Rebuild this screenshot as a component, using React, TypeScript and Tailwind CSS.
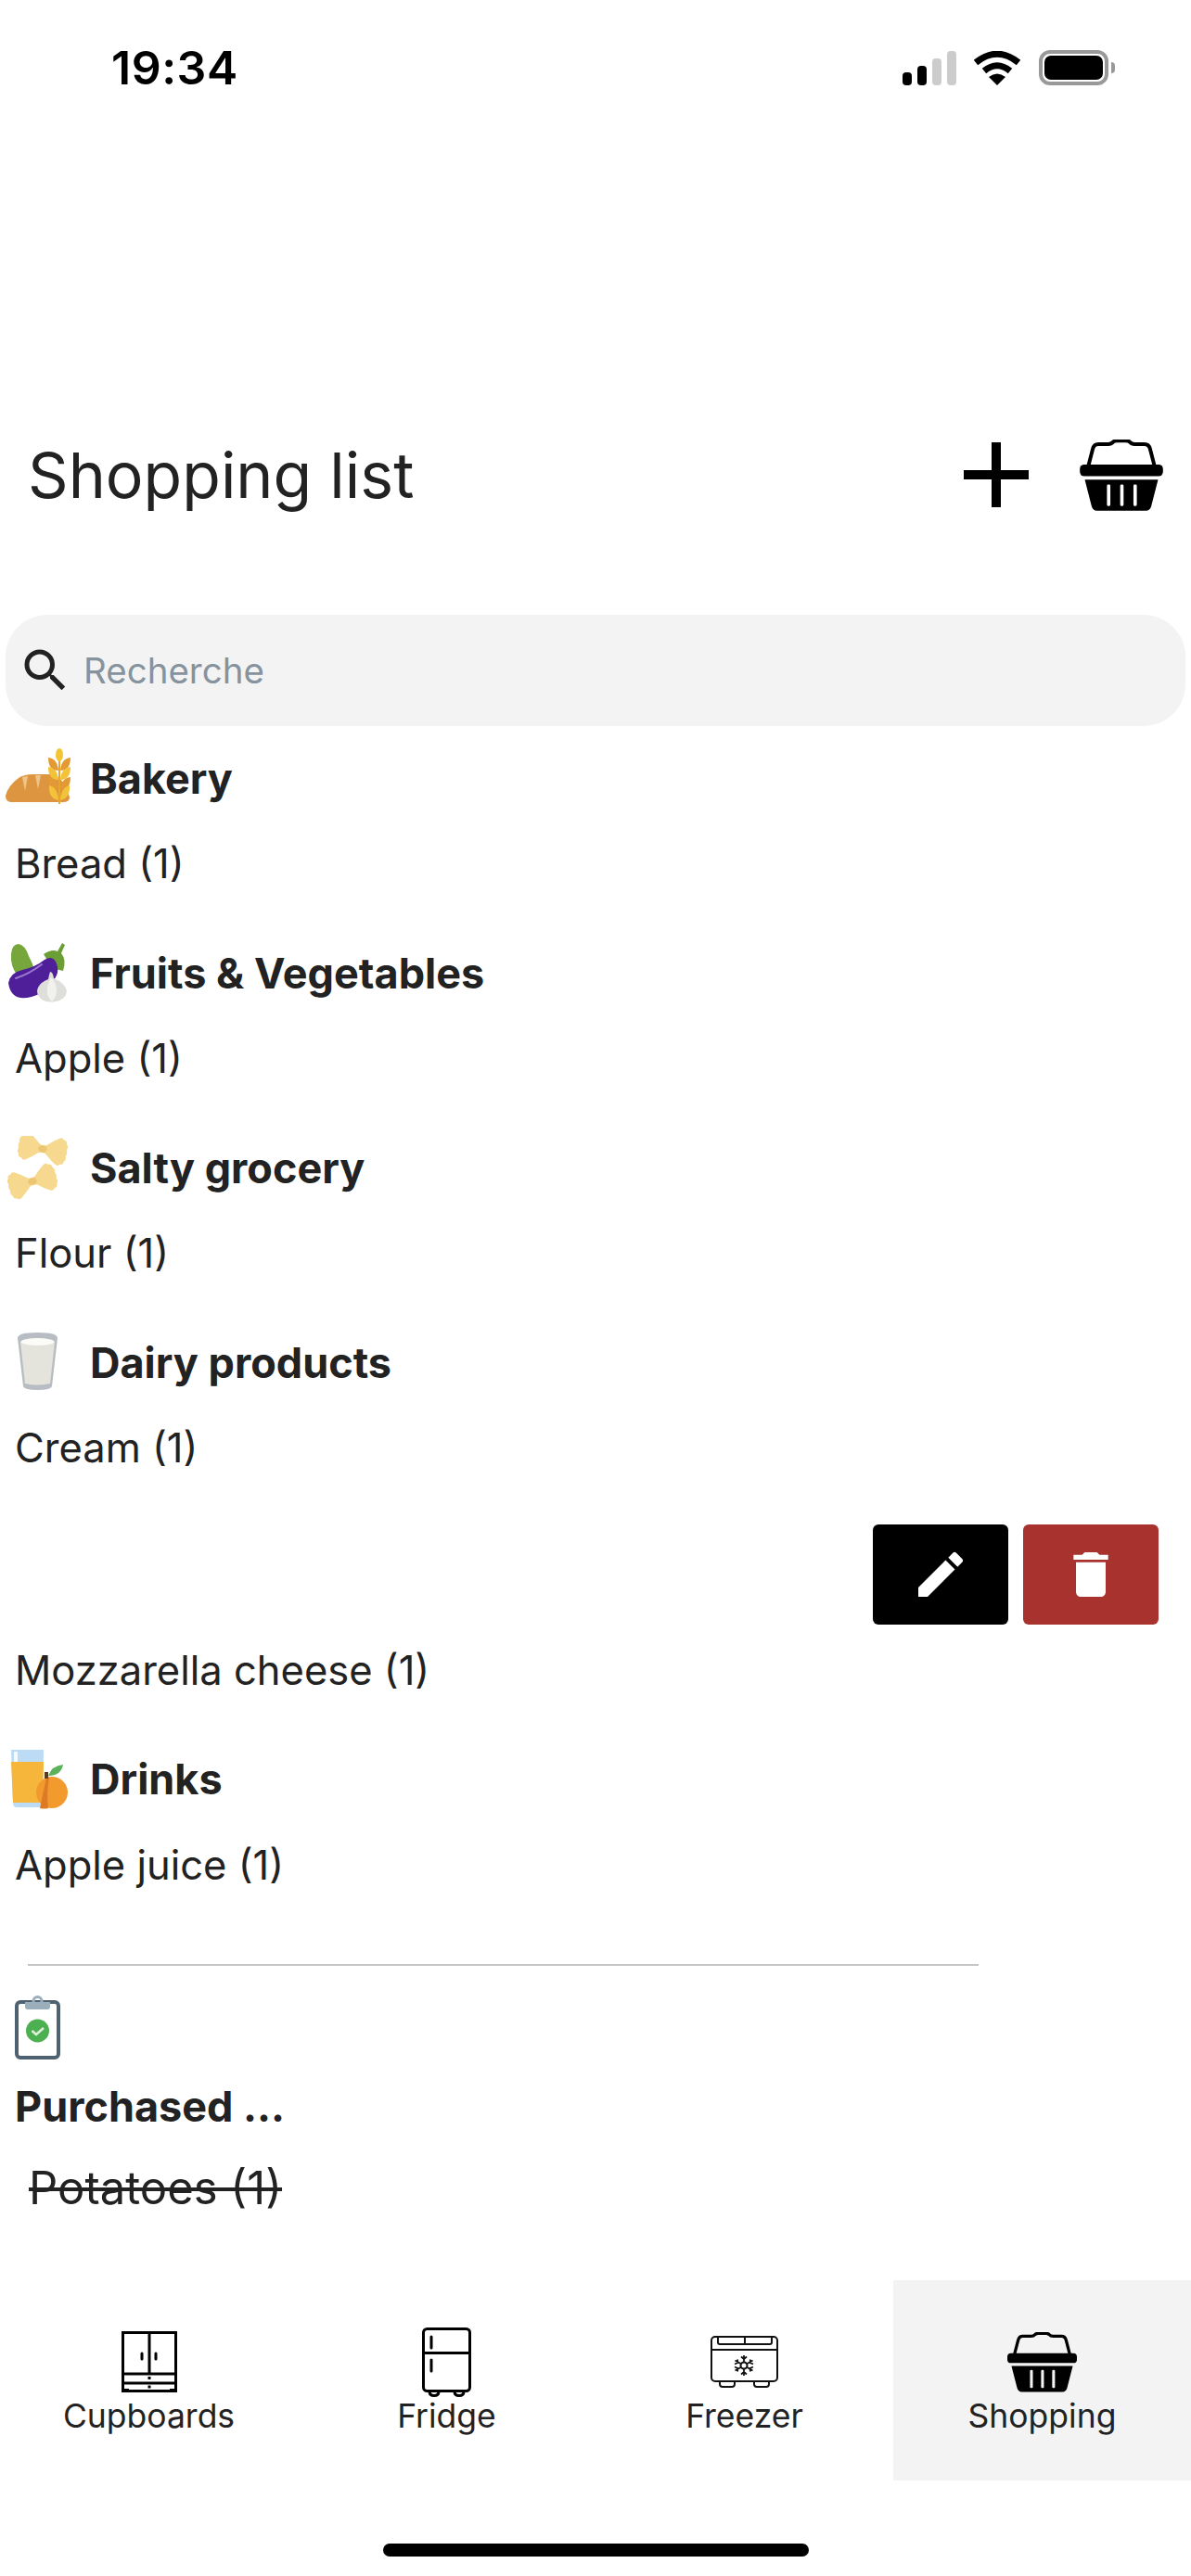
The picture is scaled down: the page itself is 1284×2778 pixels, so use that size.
import { MdDelete, MdEdit, MdSearch } from "react-icons/md";

function Basket({ className }: { className: string }) {
  return (
    <svg viewBox="0 0 270 232" className={className}>
      <path
        d="M28 84L42 30Q46 15 60 15H92Q102 15 108 8Q112 4 120 4H150Q158 4 162 8Q168 15 178 15H210Q224 15 228 30L242 84"
        fill="none"
        stroke="#000"
        strokeWidth="12"
      />
      <rect x="0" y="81" width="270" height="38" rx="14" fill="#000" />
      <path
        fillRule="evenodd"
        d="M16 130H254L232 216Q228 231 214 231H56Q42 231 38 216ZM88 150V212Q88 216 92 216H95Q99 216 99 212V150Q99 146 95 146H92Q88 146 88 150ZM131 150V212Q131 216 135 216H138Q142 216 142 212V150Q142 146 138 146H135Q131 146 131 150ZM174 150V212Q174 216 178 216H181Q185 216 185 212V150Q185 146 181 146H178Q174 146 174 150Z"
        fill="#000"
      />
    </svg>
  );
}

function Cupboard() {
  return (
    <svg viewBox="0 0 60 66" className="w-[60px] h-[66px]" fill="none" stroke="#000" strokeWidth="3">
      <rect x="1.5" y="1.5" width="57" height="63" />
      <path d="M30 1.5V46M1.5 46H58.5M1.5 56H58.5" />
      <path d="M22 24V30M37 24V30" strokeLinecap="round" />
      <rect x="28.5" y="49" width="3" height="3" fill="#000" stroke="none" />
      <rect x="28.5" y="58.5" width="3" height="3" fill="#000" stroke="none" />
      <rect x="0" y="62" width="8" height="4" fill="#000" stroke="none" />
      <rect x="52" y="62" width="8" height="4" fill="#000" stroke="none" />
    </svg>
  );
}

function Fridge() {
  return (
    <svg viewBox="0 0 53 75" className="w-[53px] h-[75px]" fill="none" stroke="#000" strokeWidth="3">
      <rect x="1.5" y="1.5" width="50" height="67" rx="4" />
      <path d="M1.5 27.5H51.5" />
      <path d="M10 10V22M10 35V47" strokeLinecap="round" />
      <path d="M8 69Q8 73.5 13 73.5Q18 73.5 18 69M35 69Q35 73.5 40 73.5Q45 73.5 45 69" />
    </svg>
  );
}

function Freezer() {
  return (
    <svg viewBox="0 0 73 56" className="w-[73px] h-[56px]" fill="none" stroke="#111" strokeWidth="2">
      <rect x="1" y="1" width="71" height="48" rx="4" />
      <path d="M8 1V7Q8 9 10 9H64Q66 9 66 7V1M37 1V9M1 15H72" />
      <path d="M10 49V52Q10 55 13 55H23Q26 55 26 52V49M47 49V52Q47 55 50 55H60Q63 55 63 52V49" />
      <circle cx="36" cy="32" r="3.5" />
      <path
        d="M36 21V28.5M36 35.5V43M26.5 26.5L33 30.2M39 33.8L45.5 37.5M26.5 37.5L33 33.8M39 30.2L45.5 26.5M33 22.5L36 25L39 22.5M33 41.5L36 39L39 41.5M26 30.5L29.5 29L29 25.5M46 33.5L42.5 35L43 38.5M26 33.5L29.5 35L29 38.5M46 30.5L42.5 29L43 25.5"
        strokeWidth="1.8"
      />
    </svg>
  );
}

function BreadEmoji() {
  return (
    <svg viewBox="0 0 70 70" className="w-[70px] h-[70px] shrink-0">
      <path d="M0 53Q3 42 14 34Q20 30 30 30H52Q66 38 69 55Q69 60 62 60H6Q0 60 0 53Z" fill="#dd9540" />
      <path d="M18 33L21 48L24 32ZM32 31L35 46L38 31Z" fill="#edc58a" />
      <path d="M58 3L58 62" stroke="#e8a62e" strokeWidth="2" />
      <ellipse cx="58" cy="9" rx="4" ry="7" fill="#f3c534" />
      <path d="M46 12Q56 13 57 26Q46 26 46 12ZM70 12Q60 13 59 26Q70 26 70 12Z" fill="#e39a35" />
      <path d="M46 22Q56 23 57 36Q46 36 46 22ZM70 22Q60 23 59 36Q70 36 70 22Z" fill="#f2c238" />
      <path d="M46 33Q56 34 57 47Q46 47 46 33ZM70 33Q60 34 59 47Q70 47 70 33Z" fill="#e39a35" />
      <path d="M47 42Q56 44 57 58Q46 56 47 42ZM69 42Q60 44 59 58Q70 56 69 42Z" fill="#f2c238" />
    </svg>
  );
}

function EggplantEmoji() {
  return (
    <svg viewBox="0 0 70 70" className="w-[70px] h-[70px] shrink-0">
      <path d="M6 14Q7 3 14 3Q21 4 25 16Q29 24 31 30Q24 34 12 36Q5 26 6 14Z" fill="#76a63c" />
      <path d="M41 14Q50 8 56 11L61 2L64 4L60 13Q66 20 62 32L54 30L46 22Z" fill="#6b9e35" />
      <path d="M3 45Q5 34 18 31Q32 28 42 20Q50 15 54 22Q60 34 50 44Q42 56 28 60Q6 66 3 45Z" fill="#4f1f9a" />
      <path d="M11 40Q26 35 39 25" stroke="#9c79d1" strokeWidth="2" fill="none" strokeLinecap="round" />
      <path d="M48 33Q51 33 52 40Q64 45 66 54Q65 63 54 65Q44 67 38 62Q32 56 35 50Q38 44 46 41Q47 36 48 33Z" fill="#dededa" />
      <path d="M49 39Q55 44 55 54Q54 62 50 65Q44 60 45 50Q46 44 49 39Z" fill="#f1f1ed" />
    </svg>
  );
}

function Bow({ transform }: { transform: string }) {
  return (
    <g transform={transform}>
      <path
        d="M-4 -5Q-12 -12 -17 -15Q-20 -17 -22 -14Q-26 -14 -26 -10Q-29 -7 -27 -4Q-29 0 -27 4Q-29 7 -26 10Q-26 14 -22 14Q-20 17 -17 15Q-12 12 -4 5Q0 3 4 5Q12 12 17 15Q20 17 22 14Q26 14 26 10Q29 7 27 4Q29 0 27 -4Q29 -7 26 -10Q26 -14 22 -14Q20 -17 17 -15Q12 -12 4 -5Q0 -3 -4 -5Z"
        fill="#f6d98e"
      />
      <ellipse cx="0" cy="0" rx="5" ry="4" fill="#ecc670" />
    </g>
  );
}

function PastaEmoji() {
  return (
    <svg viewBox="0 0 70 70" className="w-[70px] h-[70px] shrink-0">
      <Bow transform="translate(40 14) rotate(10) scale(0.95)" />
      <Bow transform="translate(29 49) rotate(-15) scale(0.95)" />
    </svg>
  );
}

function MilkEmoji() {
  return (
    <svg viewBox="0 0 70 70" className="w-[70px] h-[70px] shrink-0">
      <path d="M13 8Q13 2 34.5 2Q56 2 56 8L50 60Q49 64 34.5 64Q20 64 19 60Z" fill="#b7bdc2" />
      <path d="M16 12Q34 8 53 12L48 57Q34 60 21 57Z" fill="#e4e4dc" />
      <ellipse cx="34.5" cy="12" rx="18" ry="4" fill="#fbfbf7" />
    </svg>
  );
}

function JuiceEmoji() {
  return (
    <svg viewBox="0 0 70 70" className="w-[70px] h-[70px] shrink-0">
      <path d="M6 3H41L40 60Q40 65 36 65H12Q8 65 8 60Z" fill="#bcdcf6" />
      <path d="M6 16H41L40 60H8Z" fill="#f5b63b" />
      <rect x="9" y="5" width="4" height="11" fill="#f3f9fe" />
      <circle cx="50" cy="49" r="17" fill="#f39a2e" />
      <path d="M44 33L37 66Q42 67 46 66Q44 50 47 33Z" fill="#dc7a25" />
      <rect x="42" y="27" width="4" height="7" fill="#5a3a22" />
      <path d="M46 31Q50 20 62 19Q60 31 46 31Z" fill="#5cb25a" />
    </svg>
  );
}

function ClipboardEmoji() {
  return (
    <svg viewBox="0 0 49 69" className="w-[49px] h-[69px]">
      <rect x="2" y="7" width="45" height="60" rx="4" fill="#fff" stroke="#4f6272" strokeWidth="4" />
      <circle cx="24.5" cy="6" r="4.5" fill="none" stroke="#9aaebc" strokeWidth="3" />
      <path d="M11 7H38V12Q38 15 35 15H14Q11 15 11 12Z" fill="#9aaebc" />
      <circle cx="24.5" cy="38" r="12.5" fill="#4caf50" />
      <path d="M18.5 38L23 42L31 35" fill="none" stroke="#dff0dc" strokeWidth="2.5" />
    </svg>
  );
}

const sections = [
  { name: "Bakery", icon: <BreadEmoji />, items: ["Bread (1)"] },
  { name: "Fruits & Vegetables", icon: <EggplantEmoji />, items: ["Apple (1)"] },
  { name: "Salty grocery", icon: <PastaEmoji />, items: ["Flour (1)"] },
  { name: "Dairy products", icon: <MilkEmoji />, items: ["Cream (1)"] },
];

const tabs = [
  { label: "Cupboards", icon: <Cupboard /> },
  { label: "Fridge", icon: <Fridge /> },
  { label: "Freezer", icon: <Freezer /> },
  { label: "Shopping", icon: <Basket className="w-[75px] h-[65px]" />, active: true },
];

function Heading({ name, icon }: { name: string; icon: React.ReactNode }) {
  return (
    <div className="flex items-center h-[70px] pl-[6px] gap-[21px]">
      {icon}
      <span className="text-[45px] leading-[54px] font-bold text-[#222]">{name}</span>
    </div>
  );
}

function Item({ name }: { name: string }) {
  return <p className="h-[50px] pl-[16px] pt-[1px] text-[43.5px] leading-[50px] text-[#222]">{name}</p>;
}

export default function App() {
  return (
    <div className="w-[1284px] h-[2778px] flex flex-col bg-white font-['Inter',sans-serif] overflow-hidden">
      <div className="h-[145px] flex items-start justify-between pt-[47px] pl-[120px] pr-[82px]">
        <span className="text-[50px] leading-[52px] tracking-[0.5px] font-semibold text-black">19:34</span>
        <div className="flex items-end gap-[20px] pt-[7px]">
          <div className="flex items-end gap-[6px] h-[37px]">
            <div className="w-[10px] h-[14px] rounded-[4px] bg-black" />
            <div className="w-[10px] h-[21px] rounded-[4px] bg-black" />
            <div className="w-[10px] h-[29px] rounded-[4px] bg-[#ccc]" />
            <div className="w-[10px] h-[37px] rounded-[4px] bg-[#ccc]" />
          </div>
          <svg viewBox="0 0 50 37" className="w-[50px] h-[37px] -ml-[1px]">
            <path d="M2 12.5Q25 -6 48 12.5" fill="none" stroke="#000" strokeWidth="7" />
            <path d="M11 21.5Q25 10 39 21.5" fill="none" stroke="#000" strokeWidth="7" />
            <path d="M25 37L16 28Q25 21 34 28Z" fill="#000" />
          </svg>
          <div className="flex items-center gap-[3px]">
            <div className="w-[75px] h-[38px] rounded-[12px] border-[4px] border-[#999] p-[2px]">
              <div className="w-full h-full rounded-[7px] bg-black" />
            </div>
            <div className="w-[4px] h-[12px] rounded-r-[4px] bg-[#999]" />
          </div>
        </div>
      </div>

      <div className="h-[140px] mt-[297px] flex items-center justify-between pl-[30px] pr-[30px]">
        <h1 className="text-[68px] text-[#222]">Shopping list</h1>
        <div className="flex items-center gap-[55px]">
          <svg viewBox="0 0 70 70" className="w-[70px] h-[70px]">
            <path d="M30 0H40V30H70V40H40V70H30V40H0V30H30Z" fill="#000" />
          </svg>
          <Basket className="w-[90px] h-[77px]" />
        </div>
      </div>

      <div className="mx-[6px] mt-[81px] h-[120px] flex items-center gap-[11px] pl-[13px] rounded-[45px] bg-[#f3f3f3]">
        <MdSearch className="w-[60px] h-[60px] text-[#222]" />
        <span className="mt-[2px] text-[38.5px] text-[#86939e]">Recherche</span>
      </div>

      <div className="flex-1 mt-[22px]">
        {sections.map((s) => (
          <div key={s.name} className="h-[210px]">
            <Heading name={s.name} icon={s.icon} />
            <div className="pt-[30px]">
              {s.items.map((i) => (
                <Item key={i} name={i} />
              ))}
            </div>
          </div>
        ))}

        <div className="-mt-[1px] flex justify-end gap-[16px] pr-[35px]">
          <button className="w-[146px] h-[108px] flex items-center justify-center rounded-[6px] bg-black">
            <MdEdit className="w-[64px] h-[64px] text-white" />
          </button>
          <button className="w-[146px] h-[108px] flex items-center justify-center rounded-[6px] bg-[#a8322d]">
            <MdDelete className="w-[64px] h-[64px] text-white" />
          </button>
        </div>
        <div className="mt-[23px]">
          <Item name="Mozzarella cheese (1)" />
        </div>

        <div className="mt-[59px]">
          <Heading name="Drinks" icon={<JuiceEmoji />} />
          <div className="pt-[31px]">
            <Item name="Apple juice (1)" />
          </div>
        </div>

        <div className="mt-[83px] ml-[30px] w-[1025px] h-[2px] bg-[#c4c4c4]" />
        <div className="mt-[32px] pl-[16px]">
          <ClipboardEmoji />
        </div>
        <p className="mt-[26px] pl-[16px] text-[45px] leading-[50px] font-bold text-[#222]">Purchased ...</p>
        <p className="mt-[38px] pl-[31px] text-[49px] leading-[50px] text-[#222] line-through">Potatoes (1)</p>
      </div>

      <div className="h-[216px] grid grid-cols-4">
        {tabs.map((t) => (
          <div
            key={t.label}
            className={
              t.active
                ? "flex flex-col items-center bg-[#f3f3f3]"
                : "flex flex-col items-center"
            }
          >
            <div className="h-[126px] w-full flex items-center justify-center pt-[50px]">{t.icon}</div>
            <span className="text-[35.5px] leading-[42px] text-[#222]">{t.label}</span>
          </div>
        ))}
      </div>

      <div className="h-[103px] flex items-end justify-center pb-[21px]">
        <div className="w-[459px] h-[14px] rounded-full bg-black" />
      </div>
    </div>
  );
}
